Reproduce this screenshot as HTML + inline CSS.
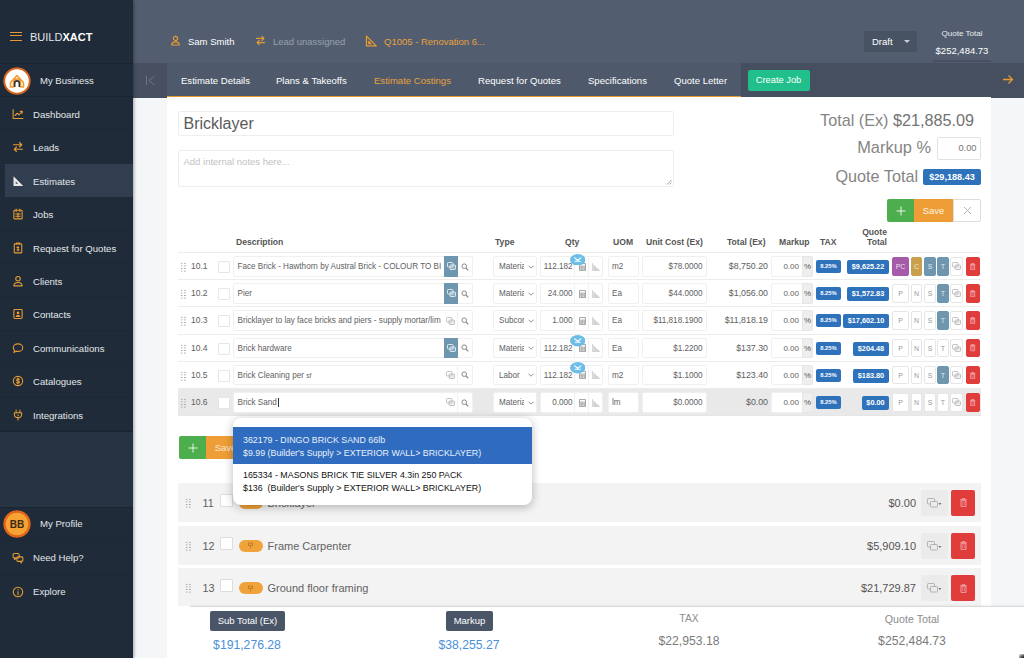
<!DOCTYPE html>
<html lang="en">
<head>
<meta charset="utf-8">
<title>Buildxact - Estimate Costings</title>
<style>
*{box-sizing:border-box;margin:0;padding:0}
html,body{width:1024px;height:658px;overflow:hidden}
body{font-family:"Liberation Sans",Arial,sans-serif;font-size:9px;color:#555;background:#f5f6f8;position:relative}
svg{display:block}
/* sidebar */
#side{position:absolute;left:0;top:0;width:133px;height:658px;background:#1f2b38;color:#e6e9ed;box-shadow:1px 0 3px rgba(0,0,0,.35);z-index:5}
#side .logo{position:absolute;left:30px;top:29.600px;font-size:11px;letter-spacing:0;color:#e4e6e8;line-height:14px}
#side .logo b{color:#fff;font-weight:700}
#side .burger{position:absolute;left:9.500px;top:32px;width:12px;height:9px;border-top:1.500px solid #e39a35;border-bottom:1.500px solid #e39a35}
#side .burger:after{content:"";position:absolute;left:0;right:0;top:2.300px;border-top:1.500px solid #e39a35}
#side .biz{position:absolute;left:0;top:63px;width:133px;height:34px;border-top:1px solid #19242f;border-bottom:1px solid #19242f;font-size:9.500px;line-height:33px;padding-left:40px;color:#e3e7eb}
#side .item{position:absolute;left:0;width:133px;height:33.400px;border-bottom:1px solid #1c2835;font-size:9.600px;line-height:35px;padding-left:33px;color:#e3e7eb;white-space:nowrap}
#side .item.on{background:#313e4f;left:5px;width:128px;padding-left:28px;border-bottom:0}
#side .item svg{position:absolute;left:11.500px;top:11px}
#side .item.on svg{left:6.500px}
.av{position:absolute;left:3px;width:28px;height:28px;border-radius:50%}
/* top */
#top{position:absolute;left:133px;top:0;width:891px;height:63px;background:#525e6f;color:#fff}
#tabs{position:absolute;left:133px;top:63px;width:891px;height:34.500px;background:#454f5f}
#tabs .tg{position:absolute;left:0;top:0;width:33.500px;height:34.500px;background:#474f61}
#tabs .strip{position:absolute;left:34px;top:0;width:574px;height:35px;background:#4e5a6b;border-bottom:2px solid #e8992f}
#tabs .t{position:absolute;top:0;line-height:35px;font-size:9.550px;color:#fff;white-space:nowrap}
#tabs .t.on{color:#e8a03c}
.tl{position:absolute;white-space:nowrap}
/* content */
#card{position:absolute;left:167px;top:97px;width:824px;height:509px;background:#fff}
.box{position:absolute;border:1px solid #eeeeee;background:#fff;border-radius:2px}
.badge{position:absolute;background:#2e72bb;color:#fff;font-weight:700;border-radius:2px;text-align:center;white-space:nowrap}
.btn{position:absolute;text-align:center;color:#fff}
.th{position:absolute;font-weight:700;font-size:8.600px;color:#555;white-space:nowrap;line-height:11px}
.row{position:absolute;left:178px;width:803px;height:27.200px;border-top:1px solid #ececec}
.row.hl{background:#e9e9e9}
.row .c{position:absolute;top:0;white-space:nowrap;line-height:27px;font-size:8.500px;color:#606060}
.row .in{position:absolute;top:3px;height:20.500px;border:1px solid #f0f0f0;background:#fff;border-radius:2px;line-height:19.500px;font-size:8.150px;color:#616161;white-space:nowrap;overflow:hidden}
.row .sq{position:absolute;top:4px;height:18.500px;border:1px solid #e6e6e6;background:#fff;border-radius:2px;line-height:17px;font-size:7px;color:#999;text-align:center}
.sec{position:absolute;left:178px;width:803px;height:39.500px;background:#f3f3f3}
.sec .n{position:absolute;left:24.500px;top:0;line-height:40px;font-size:10.800px;color:#606060}
.sec .cb{position:absolute;left:42px;top:11px;width:13px;height:13px;background:#fff;border:1px solid #ddd;border-radius:1px}
.sec .pill{position:absolute;left:60.500px;top:14px;width:24px;height:12px;border-radius:6px;background:#f0a23b}
.sec .nm{position:absolute;left:89.500px;top:0;line-height:40px;font-size:11px;color:#626262;white-space:nowrap}
.sec .pr{position:absolute;right:65px;top:0;line-height:40px;font-size:11px;color:#555;white-space:nowrap}
.sec .cp{position:absolute;left:743px;top:7px;width:27px;height:26px;background:#ebebeb;border-radius:2px}
.sec .del{position:absolute;left:773px;top:7px;width:23.500px;height:26px;background:#e03c3c;border-radius:2px}
.grip{position:absolute;width:6.600px;height:10.400px;background-image:radial-gradient(circle,#a4a4a4 0.600px,transparent 0.950px);background-size:3.300px 2.600px}
#foot{position:absolute;left:133px;top:606px;width:891px;height:52px;background:linear-gradient(90deg,#f5f6f8 0,#f5f6f8 34.500px,#fff 34.500px);border-top:1px solid transparent}
#foot:before{content:"";position:absolute;left:57px;right:0;top:-1px;height:1px;background:#d9d9d9;box-shadow:0 -1px 2px rgba(0,0,0,.07)}
#foot .fb{position:absolute;top:3.600px;height:20px;line-height:19.500px;background:#4a5568;color:#fff;border-radius:2px;text-align:center;font-size:9.500px}
#foot .v{position:absolute;font-size:12.200px;white-space:nowrap;transform:translateX(-50%)}
#dd{position:absolute;left:233px;top:418px;width:299px;height:87px;background:#fff;border-radius:8px;box-shadow:0 2px 10px rgba(0,0,0,.28);padding:9.300px 0;z-index:4;font-size:8.850px;color:#111;line-height:13px}
#dd div{height:36.300px;padding:6.500px 10px 0 10px;white-space:nowrap}
#dd div+div{padding-top:5.200px;line-height:13.400px}
#dd .sel{background:#2f6cbf;color:#e8f0fb}
</style>
</head>
<body>
<div id="side">
<div class="burger"></div>
<div class="logo">BUILD<b>XACT</b></div>
<div class="biz">My Business</div>
<svg class="av" style="top:67px" viewBox="0 0 28 28"><circle cx="14" cy="14" r="12.800" fill="#fff" stroke="#d9651e" stroke-width="2"/><path d="M7.500 15.500L14 8.500l6.500 7V20h-3v-4.500a3.500 3.500 0 0 0-7 0V20h-3z" fill="none" stroke="#f39a2e" stroke-width="1.600" stroke-linejoin="round"/><path d="M11.700 20v-3.800a2.300 2.300 0 0 1 4.600 0V20" fill="none" stroke="#333" stroke-width="1.600"/></svg>
<div class="item" style="top:97.0px"><svg width="12" height="12" viewBox="0 0 16 16" ><path fill="none" stroke="#e59a34" stroke-width="1.45" stroke-linecap="round" stroke-linejoin="round" d="M1.5 2v12h13"/><path fill="none" stroke="#e59a34" stroke-width="1.45" stroke-linecap="round" stroke-linejoin="round" d="M4 10l3-3 2.5 2 4-4.5"/><path fill="none" stroke="#e59a34" stroke-width="1.45" stroke-linecap="round" stroke-linejoin="round" d="M11 4.5h2.5V7"/></svg>Dashboard</div>
<div class="item" style="top:130.4px"><svg width="12" height="12" viewBox="0 0 16 16" ><path fill="none" stroke="#e59a34" stroke-width="1.45" stroke-linecap="round" stroke-linejoin="round" d="M2 5h11M10 2l3 3-3 3"/><path fill="none" stroke="#e59a34" stroke-width="1.45" stroke-linecap="round" stroke-linejoin="round" d="M14 11H3M6 8l-3 3 3 3"/></svg>Leads</div>
<div class="item on" style="top:163.8px"><svg width="12" height="12" viewBox="0 0 16 16" ><path fill="#e8e8e8" d="M2 1.5v13h13zM5 8.5l3 3H5z" fill-rule="evenodd"/></svg>Estimates</div>
<div class="item" style="top:197.2px"><svg width="12" height="12" viewBox="0 0 16 16" ><rect fill="none" stroke="#e59a34" stroke-width="1.45" stroke-linecap="round" stroke-linejoin="round" x="2.5" y="3" width="11" height="11.5" rx="1"/><path fill="none" stroke="#e59a34" stroke-width="1.45" stroke-linecap="round" stroke-linejoin="round" d="M5.5 1.5v3M10.5 1.5v3M5 8h6M5 11h6M8 6.5v6"/></svg>Jobs</div>
<div class="item" style="top:230.6px"><svg width="12" height="12" viewBox="0 0 16 16" ><rect fill="none" stroke="#e59a34" stroke-width="1.45" stroke-linecap="round" stroke-linejoin="round" x="3" y="2.5" width="10" height="12" rx="1"/><path fill="none" stroke="#e59a34" stroke-width="1.45" stroke-linecap="round" stroke-linejoin="round" d="M6 2.5v-1h4v1"/><path fill="none" stroke="#e59a34" stroke-width="1.45" stroke-linecap="round" stroke-linejoin="round" d="M8 6v5.5M6.7 7.2h2.2M6.7 10.5h2.6"/></svg>Request for Quotes</div>
<div class="item" style="top:264.0px"><svg width="12" height="12" viewBox="0 0 16 16" ><circle fill="none" stroke="#e59a34" stroke-width="1.45" stroke-linecap="round" stroke-linejoin="round" cx="8" cy="5" r="3"/><path fill="none" stroke="#e59a34" stroke-width="1.45" stroke-linecap="round" stroke-linejoin="round" d="M2.5 14.5c0-3.5 2.5-4.5 5.5-4.5s5.5 1 5.5 4.5z"/></svg>Clients</div>
<div class="item" style="top:297.4px"><svg width="12" height="12" viewBox="0 0 16 16" ><rect fill="none" stroke="#e59a34" stroke-width="1.45" stroke-linecap="round" stroke-linejoin="round" x="2.5" y="2" width="11" height="12" rx="1.2"/><circle cx="8" cy="6.5" r="1.8" fill="#e59a34"/><path fill="#e59a34" d="M4.8 12c0-2 1.4-2.7 3.2-2.7s3.2.7 3.2 2.7z"/></svg>Contacts</div>
<div class="item" style="top:330.8px"><svg width="12" height="12" viewBox="0 0 16 16" ><path fill="none" stroke="#e59a34" stroke-width="1.45" stroke-linecap="round" stroke-linejoin="round" d="M8 2.5c3.6 0 6.3 2.2 6.3 5s-2.7 5-6.3 5c-.8 0-1.6-.1-2.3-.3L2.5 14l1-2.7C2.400 10.400 1.700 9 1.700 7.500c0-2.800 2.700-5 6.300-5z"/></svg>Communications</div>
<div class="item" style="top:364.2px"><svg width="12" height="12" viewBox="0 0 16 16" ><circle fill="none" stroke="#e59a34" stroke-width="1.45" stroke-linecap="round" stroke-linejoin="round" cx="8" cy="8" r="6.2"/><path fill="none" stroke="#e59a34" stroke-width="1.45" stroke-linecap="round" stroke-linejoin="round" stroke-width="1.200" d="M9.800 6c-.3-.6-1-.9-1.800-.9-1 0-1.800.5-1.800 1.400 0 2 3.700.9 3.700 2.900 0 .9-.8 1.500-1.900 1.500-.9 0-1.600-.4-1.900-1M8 4v8"/></svg>Catalogues</div>
<div class="item" style="top:397.6px"><svg width="12" height="12" viewBox="0 0 16 16" ><path fill="none" stroke="#e59a34" stroke-width="1.45" stroke-linecap="round" stroke-linejoin="round" d="M5.500 1.500v3.500M10.500 1.500v3.500"/><path fill="none" stroke="#e59a34" stroke-width="1.45" stroke-linecap="round" stroke-linejoin="round" d="M3.200 5h9.600v2.300c0 2.600-2 4.200-4.800 4.200s-4.800-1.600-4.800-4.200z"/><path fill="none" stroke="#e59a34" stroke-width="1.45" stroke-linecap="round" stroke-linejoin="round" d="M8 11.500v3"/><path fill="#e59a34" d="M8.600 6.300L6.600 8.800h1.300l-.5 1.700 2-2.500H8.100z"/></svg>Integrations</div>
<div style="position:absolute;left:0;top:431px;width:133px;height:77px;border-top:1px solid #19242f;border-bottom:1px solid #19242f;background:#253342"></div>
<div class="item" style="top:508px;padding-left:40px;line-height:32.500px">My Profile</div>
<svg class="av" style="top:510px" viewBox="0 0 28 28"><circle cx="14" cy="14" r="12.500" fill="#f7a233" stroke="#e0661c" stroke-width="2.500"/><text x="14" y="17.800" text-anchor="middle" font-family="Liberation Sans, Arial, sans-serif" font-weight="700" font-size="10" fill="#3a2a18">BB</text></svg>
<div class="item" style="top:541.400px;line-height:34.500px"><svg width="12" height="12" viewBox="0 0 16 16" ><rect fill="none" stroke="#e59a34" stroke-width="1.45" stroke-linecap="round" stroke-linejoin="round" x="1.500" y="2" width="8" height="6" rx="1.500"/><path fill="none" stroke="#e59a34" stroke-width="1.45" stroke-linecap="round" stroke-linejoin="round" d="M3.500 8v2l2-2"/><rect fill="none" stroke="#e59a34" stroke-width="1.45" stroke-linecap="round" stroke-linejoin="round" x="6.500" y="6.500" width="8" height="6" rx="1.500" fill="#1f2b38"/><path fill="none" stroke="#e59a34" stroke-width="1.45" stroke-linecap="round" stroke-linejoin="round" d="M12.500 12.500v2l-2-2"/></svg>Need Help?</div>
<div class="item" style="top:574.800px;border-bottom:0;line-height:33.500px"><svg width="12" height="12" viewBox="0 0 16 16" ><circle fill="none" stroke="#e59a34" stroke-width="1.45" stroke-linecap="round" stroke-linejoin="round" cx="8" cy="8" r="6.300"/><path fill="none" stroke="#e59a34" stroke-width="1.45" stroke-linecap="round" stroke-linejoin="round" d="M8 7.500v4M8 4.800v.2"/></svg>Explore</div>
</div>
<div id="top">
<svg class="tl" style="left:37px;top:35px" width="11" height="11" viewBox="0 0 16 16"><circle fill="none" stroke="#e59a34" stroke-width="1.700" stroke-linecap="round" stroke-linejoin="round" cx="8" cy="5" r="3"/><path fill="none" stroke="#e59a34" stroke-width="1.700" stroke-linecap="round" stroke-linejoin="round" d="M2.500 14.500c0-3.500 2.500-4.500 5.500-4.500s5.500 1 5.500 4.500z"/></svg><div class="tl" style="left:55px;top:34.600px;font-size:9.500px;line-height:14px;color:#fff">Sam Smith</div>
<svg class="tl" style="left:122px;top:35px" width="11" height="11" viewBox="0 0 16 16"><path fill="none" stroke="#e59a34" stroke-width="1.700" stroke-linecap="round" stroke-linejoin="round" d="M2 5h11M10 2l3 3-3 3"/><path fill="none" stroke="#e59a34" stroke-width="1.700" stroke-linecap="round" stroke-linejoin="round" d="M14 11H3M6 8l-3 3 3 3"/></svg><div class="tl" style="left:140px;top:34.600px;font-size:9.500px;line-height:14px;color:#96a0ad">Lead unassigned</div>
<svg class="tl" style="left:232px;top:35px" width="12" height="12" viewBox="0 0 16 16"><path fill="none" stroke="#e59a34" stroke-width="1.700" stroke-linecap="round" stroke-linejoin="round" d="M2 1.500v13h13zM5 8.500l3 3H5z"/></svg><div class="tl" style="left:251px;top:34.600px;font-size:9.500px;line-height:14px;color:#e8a03c">Q1005 - Renovation 6...</div>
<div class="tl" style="left:731px;top:31px;width:53px;height:21px;background:#475263;border-radius:1px;color:#fff;font-size:9.500px;line-height:21px;padding-left:8px">Draft<span style="position:absolute;left:40px;top:9px;border:3px solid transparent;border-top:3.500px solid #c9ced6;border-bottom:0"></span></div>
<div class="tl" style="left:800px;top:42px;width:58px;height:20px;border-bottom:2px solid #465061"></div><div class="tl" style="left:800px;top:28.400px;width:58px;text-align:center;font-size:8.100px;line-height:12px;color:#e8ebee">Quote Total</div>
<div class="tl" style="left:795px;top:43.800px;width:68px;text-align:center;font-size:9.500px;line-height:14px;color:#fff">$252,484.73</div>
</div>
<div id="tabs"><div class="tg"></div><div class="strip"></div>
<svg class="tl" style="left:11.500px;top:11.500px" width="11" height="11" viewBox="0 0 10 10"><path d="M1.300 1v8M8.600 1L3.600 5l5 4" fill="none" stroke="#6f7989" stroke-width=".9"/></svg><div class="t" style="left:48px">Estimate Details</div><div class="t" style="left:143px">Plans &amp; Takeoffs</div><div class="t on" style="left:241px">Estimate Costings</div><div class="t" style="left:345px">Request for Quotes</div><div class="t" style="left:455px">Specifications</div><div class="t" style="left:541px">Quote Letter</div>
<div class="tl" style="left:614.500px;top:6.500px;width:62px;height:21px;background:#21bf8b;border-radius:2px;color:#fff;font-size:9.300px;line-height:21px;text-align:center">Create Job</div>
<svg class="tl" style="left:869px;top:11px" width="12" height="11" viewBox="0 0 12 11"><path d="M1 5.500h9.500M6.500 1.500l4 4-4 4" fill="none" stroke="#e59a34" stroke-width="1.300"/></svg></div>
<div id="card"></div>
<div class="box" style="left:178px;top:111px;width:496px;height:25px;font-size:16px;line-height:24px;padding-left:4.500px;color:#5a5a5a">Bricklayer</div>
<div class="box" style="left:178px;top:150px;width:496px;height:37px;font-size:9.500px;line-height:12px;padding:4.500px 4.500px;color:#c2c2c2">Add internal notes here...<svg style="position:absolute;right:1px;bottom:1px" width="6" height="6" viewBox="0 0 6 6"><path d="M5.500 1L1 5.500M5.500 3.500l-2 2" stroke="#888" stroke-width=".8" fill="none"/></svg></div>
<div class="tl" style="right:50px;top:110px;font-size:16.200px;line-height:20px;color:#858585">Total (Ex) <span style="color:#737373">$21,885.09</span></div>
<div class="tl" style="right:93px;top:137px;font-size:16.400px;line-height:20px;color:#858585">Markup %</div>
<div class="box" style="left:936.500px;top:136.500px;width:44.500px;height:23px;font-size:9.300px;line-height:21px;text-align:right;padding-right:3.500px;color:#777;border-color:#e2e2e2">0.00</div>
<div class="tl" style="right:106px;top:166px;font-size:16.200px;line-height:20px;color:#858585">Quote Total</div>
<div class="badge" style="left:923px;top:169px;width:58px;height:16px;font-size:9.100px;line-height:16px">$29,188.43</div>
<div class="btn" style="left:887px;top:199px;width:27px;height:23px;background:#4cae4c;border-radius:2px 0 0 2px"><svg style="position:absolute;left:8.5px;top:6.5px" width="10" height="10" viewBox="0 0 10 10"><path d="M5 .5v9M.5 5h9" stroke="#e8f5e8" stroke-width="1"/></svg></div>
<div class="btn" style="left:914px;top:199px;width:39px;height:23px;background:#ef9d36;font-size:9.400px;line-height:23px;color:#fff4e2">Save</div>
<div class="btn" style="left:953px;top:199px;width:28px;height:23px;background:#fff;border:1px solid #ddd;border-radius:0 2px 2px 0"><svg style="position:absolute;left:8.500px;top:6px" width="9" height="9" viewBox="0 0 9 9"><path d="M1 1l7 7M8 1L1 8" stroke="#b5b5b5" stroke-width="1"/></svg></div>
<div class="th" style="left:236px;top:236.500px">Description</div><div class="th" style="left:495px;top:236.500px">Type</div><div class="th" style="left:565px;top:236.500px">Qty</div><div class="th" style="left:613px;top:236.500px">UOM</div><div class="th" style="left:646px;top:236.500px">Unit Cost (Ex)</div><div class="th" style="left:727px;top:236.500px">Total (Ex)</div><div class="th" style="left:779px;top:236.500px">Markup</div><div class="th" style="left:820px;top:236.500px">TAX</div><div class="th" style="left:850px;width:37px;top:226.500px;text-align:right;line-height:10.800px">Quote<br>Total</div>
<div class="row" style="top:252.0px"><div class="grip" style="left:1.500px;top:9px"></div><div class="c" style="left:13px">10.1</div><div style="position:absolute;left:40px;top:8px;width:12px;height:12px;border:1px solid #e6e6e6;background:#fff;border-radius:1px"></div><div class="in" style="left:55px;width:212px;padding-left:3.500px;border-radius:2px 0 0 2px">Face Brick - Hawthorn by Austral Brick - COLOUR TO BI</div><div class="in" style="left:266px;width:14px;background:#6e97af;border-color:#6e97af;border-radius:0"><svg style="position:absolute;left:50%;top:50%;margin:-4px 0 0 -4.500px" width="9" height="8" viewBox="0 0 9 8"><rect x=".5" y=".5" width="5.500" height="4.500" rx=".8" fill="none" stroke="#e6eef3" stroke-width=".9"/><rect x="3" y="3" width="5.500" height="4.500" rx=".8" fill="#e6eef3" stroke="#e6eef3" stroke-width=".9" fill-opacity=".25"/></svg></div><div class="in" style="left:280px;width:15px;border-left:0;border-radius:0 2px 2px 0"><svg style="position:absolute;left:3px;top:5.500px" width="8" height="8" viewBox="0 0 8 8"><circle cx="3.200" cy="3.200" r="2.300" fill="none" stroke="#888" stroke-width="1"/><path d="M5 5l2.300 2.300" stroke="#888" stroke-width="1.200"/></svg></div><div class="in" style="left:315px;width:44px;padding-left:5px">Materia<span style="position:absolute;right:0;top:0;width:12px;height:19px;background:#fff"></span><svg style="position:absolute;right:2.500px;top:7.500px" width="6" height="4" viewBox="0 0 6 4"><path d="M.5.700l2.500 2.500 2.500-2.500" fill="none" stroke="#888" stroke-width=".9"/></svg></div><div class="in" style="left:362px;width:35px;text-align:right;padding-right:1.500px;border-radius:2px 0 0 2px">112.182</div><div class="in" style="left:396px;width:15px;border-radius:0"><svg style="position:absolute;left:4px;top:5.500px" width="7" height="8" viewBox="0 0 7 8"><rect x="0" y="0" width="7" height="8" rx=".7" fill="#a8a8a8"/><rect x="1" y="1" width="5" height="1.600" fill="#fff"/><path d="M1 3.800h5M1 5.200h5M1 6.600h5" stroke="#fff" stroke-width=".6" stroke-dasharray="1 .5"/></svg></div><div class="in" style="left:410px;width:15px;border-radius:0 2px 2px 0"><svg style="position:absolute;left:3px;top:5.500px" width="8" height="8" viewBox="0 0 8 8"><path d="M.4 0v7.600H8" fill="none" stroke="#c4c4c4" stroke-width=".8"/><path d="M1.300 1l1.700 1.700 1.500 1.800 1.500 1 1.500 1.700H1.300z" fill="#d2d2d2"/></svg></div><svg style="position:absolute;left:391.500px;top:.5px;z-index:2" width="15.500" height="11.500" viewBox="0 0 15 12" preserveAspectRatio="none"><ellipse cx="7.500" cy="6" rx="7.500" ry="6" fill="#6cbde8"/><path d="M4.500 4l3 2.500 3-2.500M5 7.500h5" stroke="#fff" stroke-width="1.100" fill="none" stroke-linecap="round"/></svg><div class="in" style="left:430px;width:31px;padding-left:3px">m2</div><div class="in" style="left:464px;width:65px;text-align:right;padding-right:3.500px">$78.0000</div><div class="c" style="right:213px;font-size:8.800px">$8,750.20</div><div class="in" style="left:593px;width:32px;text-align:right;padding-right:3px;border-radius:2px 0 0 2px;font-size:8px">0.00</div><div class="in" style="left:624px;width:11px;background:#eee;border-color:#e6e6e6;border-radius:0 2px 2px 0;text-align:center;font-size:8px;color:#555">%</div><div class="badge" style="left:638px;top:7px;width:25px;height:13px;font-size:5.800px;line-height:13px">8.25%</div><div class="badge" style="right:92px;top:7px;width:42px;height:14px;font-size:7.300px;line-height:14px">$9,625.22</div><div class="sq" style="left:714px;width:17px;background:#a55ba9;border-color:#a55ba9;color:#f0dff1">PC</div><div class="sq" style="left:733px;width:11px;background:#c9a14d;border-color:#c9a14d;color:#f3e7cb">C</div><div class="sq" style="left:746px;width:12px;background:#6e97af;border-color:#6e97af;color:#dfe9ef">S</div><div class="sq" style="left:759px;width:12px;background:#6e97af;border-color:#6e97af;color:#dfe9ef">T</div><div class="sq" style="left:772px;width:13px"><svg style="position:absolute;left:50%;top:50%;margin:-4px 0 0 -4.500px" width="9" height="8" viewBox="0 0 9 8"><rect x=".5" y=".5" width="5.500" height="4.500" rx=".8" fill="none" stroke="#bbb" stroke-width=".9"/><rect x="3" y="3" width="5.500" height="4.500" rx=".8" fill="#bbb" stroke="#bbb" stroke-width=".9" fill-opacity=".25"/></svg></div><div class="sq" style="left:788px;width:14px;background:#e03c3c;border-color:#e03c3c"><svg style="position:absolute;left:50%;top:50%;margin:-3.500px 0 0 -2.700px" width="5.400" height="7.200" viewBox="0 0 6 8"><path d="M0 1.500h6M2 1.500V.5h2v1M.8 2.500h4.400V7.500H.8z" fill="none" stroke="#f6bcbc" stroke-width=".8"/><path d="M2.300 3.500v3M3.700 3.500v3" stroke="#f6bcbc" stroke-width=".5"/></svg></div></div>
<div class="row" style="top:279.2px"><div class="grip" style="left:1.500px;top:9px"></div><div class="c" style="left:13px">10.2</div><div style="position:absolute;left:40px;top:8px;width:12px;height:12px;border:1px solid #e6e6e6;background:#fff;border-radius:1px"></div><div class="in" style="left:55px;width:212px;padding-left:3.500px;border-radius:2px 0 0 2px">Pier</div><div class="in" style="left:266px;width:14px;background:#6e97af;border-color:#6e97af;border-radius:0"><svg style="position:absolute;left:50%;top:50%;margin:-4px 0 0 -4.500px" width="9" height="8" viewBox="0 0 9 8"><rect x=".5" y=".5" width="5.500" height="4.500" rx=".8" fill="none" stroke="#e6eef3" stroke-width=".9"/><rect x="3" y="3" width="5.500" height="4.500" rx=".8" fill="#e6eef3" stroke="#e6eef3" stroke-width=".9" fill-opacity=".25"/></svg></div><div class="in" style="left:280px;width:15px;border-left:0;border-radius:0 2px 2px 0"><svg style="position:absolute;left:3px;top:5.500px" width="8" height="8" viewBox="0 0 8 8"><circle cx="3.200" cy="3.200" r="2.300" fill="none" stroke="#888" stroke-width="1"/><path d="M5 5l2.300 2.300" stroke="#888" stroke-width="1.200"/></svg></div><div class="in" style="left:315px;width:44px;padding-left:5px">Materia<span style="position:absolute;right:0;top:0;width:12px;height:19px;background:#fff"></span><svg style="position:absolute;right:2.500px;top:7.500px" width="6" height="4" viewBox="0 0 6 4"><path d="M.5.700l2.500 2.500 2.500-2.500" fill="none" stroke="#888" stroke-width=".9"/></svg></div><div class="in" style="left:362px;width:35px;text-align:right;padding-right:1.500px;border-radius:2px 0 0 2px">24.000</div><div class="in" style="left:396px;width:15px;border-radius:0"><svg style="position:absolute;left:4px;top:5.500px" width="7" height="8" viewBox="0 0 7 8"><rect x="0" y="0" width="7" height="8" rx=".7" fill="#a8a8a8"/><rect x="1" y="1" width="5" height="1.600" fill="#fff"/><path d="M1 3.800h5M1 5.200h5M1 6.600h5" stroke="#fff" stroke-width=".6" stroke-dasharray="1 .5"/></svg></div><div class="in" style="left:410px;width:15px;border-radius:0 2px 2px 0"><svg style="position:absolute;left:3px;top:5.500px" width="8" height="8" viewBox="0 0 8 8"><path d="M.4 0v7.600H8" fill="none" stroke="#c4c4c4" stroke-width=".8"/><path d="M1.300 1l1.700 1.700 1.500 1.800 1.500 1 1.500 1.700H1.300z" fill="#d2d2d2"/></svg></div><div class="in" style="left:430px;width:31px;padding-left:3px">Ea</div><div class="in" style="left:464px;width:65px;text-align:right;padding-right:3.500px">$44.0000</div><div class="c" style="right:213px;font-size:8.800px">$1,056.00</div><div class="in" style="left:593px;width:32px;text-align:right;padding-right:3px;border-radius:2px 0 0 2px;font-size:8px">0.00</div><div class="in" style="left:624px;width:11px;background:#eee;border-color:#e6e6e6;border-radius:0 2px 2px 0;text-align:center;font-size:8px;color:#555">%</div><div class="badge" style="left:638px;top:7px;width:25px;height:13px;font-size:5.800px;line-height:13px">8.25%</div><div class="badge" style="right:92px;top:7px;width:42px;height:14px;font-size:7.300px;line-height:14px">$1,572.83</div><div class="sq" style="left:714px;width:17px">P</div><div class="sq" style="left:733px;width:11px">N</div><div class="sq" style="left:746px;width:12px">S</div><div class="sq" style="left:759px;width:12px;background:#6e97af;border-color:#6e97af;color:#dfe9ef">T</div><div class="sq" style="left:772px;width:13px"><svg style="position:absolute;left:50%;top:50%;margin:-4px 0 0 -4.500px" width="9" height="8" viewBox="0 0 9 8"><rect x=".5" y=".5" width="5.500" height="4.500" rx=".8" fill="none" stroke="#bbb" stroke-width=".9"/><rect x="3" y="3" width="5.500" height="4.500" rx=".8" fill="#bbb" stroke="#bbb" stroke-width=".9" fill-opacity=".25"/></svg></div><div class="sq" style="left:788px;width:14px;background:#e03c3c;border-color:#e03c3c"><svg style="position:absolute;left:50%;top:50%;margin:-3.500px 0 0 -2.700px" width="5.400" height="7.200" viewBox="0 0 6 8"><path d="M0 1.500h6M2 1.500V.5h2v1M.8 2.500h4.400V7.500H.8z" fill="none" stroke="#f6bcbc" stroke-width=".8"/><path d="M2.300 3.500v3M3.700 3.500v3" stroke="#f6bcbc" stroke-width=".5"/></svg></div></div>
<div class="row" style="top:306.4px"><div class="grip" style="left:1.500px;top:9px"></div><div class="c" style="left:13px">10.3</div><div style="position:absolute;left:40px;top:8px;width:12px;height:12px;border:1px solid #e6e6e6;background:#fff;border-radius:1px"></div><div class="in" style="left:55px;width:212px;padding-left:3.500px;border-radius:2px 0 0 2px">Bricklayer to lay face bricks and piers - supply mortar/lim</div><div class="in" style="left:266px;width:14px;border-radius:0;border-left:0"><svg style="position:absolute;left:50%;top:50%;margin:-4px 0 0 -4.500px" width="9" height="8" viewBox="0 0 9 8"><rect x=".5" y=".5" width="5.500" height="4.500" rx=".8" fill="none" stroke="#bbb" stroke-width=".9"/><rect x="3" y="3" width="5.500" height="4.500" rx=".8" fill="#bbb" stroke="#bbb" stroke-width=".9" fill-opacity=".25"/></svg></div><div class="in" style="left:280px;width:15px;border-left:0;border-radius:0 2px 2px 0"><svg style="position:absolute;left:3px;top:5.500px" width="8" height="8" viewBox="0 0 8 8"><circle cx="3.200" cy="3.200" r="2.300" fill="none" stroke="#888" stroke-width="1"/><path d="M5 5l2.300 2.300" stroke="#888" stroke-width="1.200"/></svg></div><div class="in" style="left:315px;width:44px;padding-left:5px">Subcon<span style="position:absolute;right:0;top:0;width:12px;height:19px;background:#fff"></span><svg style="position:absolute;right:2.500px;top:7.500px" width="6" height="4" viewBox="0 0 6 4"><path d="M.5.700l2.500 2.500 2.500-2.500" fill="none" stroke="#888" stroke-width=".9"/></svg></div><div class="in" style="left:362px;width:35px;text-align:right;padding-right:1.500px;border-radius:2px 0 0 2px">1.000</div><div class="in" style="left:396px;width:15px;border-radius:0"><svg style="position:absolute;left:4px;top:5.500px" width="7" height="8" viewBox="0 0 7 8"><rect x="0" y="0" width="7" height="8" rx=".7" fill="#a8a8a8"/><rect x="1" y="1" width="5" height="1.600" fill="#fff"/><path d="M1 3.800h5M1 5.200h5M1 6.600h5" stroke="#fff" stroke-width=".6" stroke-dasharray="1 .5"/></svg></div><div class="in" style="left:410px;width:15px;border-radius:0 2px 2px 0"><svg style="position:absolute;left:3px;top:5.500px" width="8" height="8" viewBox="0 0 8 8"><path d="M.4 0v7.600H8" fill="none" stroke="#c4c4c4" stroke-width=".8"/><path d="M1.300 1l1.700 1.700 1.500 1.800 1.500 1 1.500 1.700H1.300z" fill="#d2d2d2"/></svg></div><div class="in" style="left:430px;width:31px;padding-left:3px">Ea</div><div class="in" style="left:464px;width:65px;text-align:right;padding-right:3.500px">$11,818.1900</div><div class="c" style="right:213px;font-size:8.800px">$11,818.19</div><div class="in" style="left:593px;width:32px;text-align:right;padding-right:3px;border-radius:2px 0 0 2px;font-size:8px">0.00</div><div class="in" style="left:624px;width:11px;background:#eee;border-color:#e6e6e6;border-radius:0 2px 2px 0;text-align:center;font-size:8px;color:#555">%</div><div class="badge" style="left:638px;top:7px;width:25px;height:13px;font-size:5.800px;line-height:13px">8.25%</div><div class="badge" style="right:92px;top:7px;width:46px;height:14px;font-size:7.300px;line-height:14px">$17,602.10</div><div class="sq" style="left:714px;width:17px">P</div><div class="sq" style="left:733px;width:11px">N</div><div class="sq" style="left:746px;width:12px">S</div><div class="sq" style="left:759px;width:12px;background:#6e97af;border-color:#6e97af;color:#dfe9ef">T</div><div class="sq" style="left:772px;width:13px"><svg style="position:absolute;left:50%;top:50%;margin:-4px 0 0 -4.500px" width="9" height="8" viewBox="0 0 9 8"><rect x=".5" y=".5" width="5.500" height="4.500" rx=".8" fill="none" stroke="#bbb" stroke-width=".9"/><rect x="3" y="3" width="5.500" height="4.500" rx=".8" fill="#bbb" stroke="#bbb" stroke-width=".9" fill-opacity=".25"/></svg></div><div class="sq" style="left:788px;width:14px;background:#e03c3c;border-color:#e03c3c"><svg style="position:absolute;left:50%;top:50%;margin:-3.500px 0 0 -2.700px" width="5.400" height="7.200" viewBox="0 0 6 8"><path d="M0 1.500h6M2 1.500V.5h2v1M.8 2.500h4.400V7.500H.8z" fill="none" stroke="#f6bcbc" stroke-width=".8"/><path d="M2.300 3.500v3M3.700 3.500v3" stroke="#f6bcbc" stroke-width=".5"/></svg></div></div>
<div class="row" style="top:333.6px"><div class="grip" style="left:1.500px;top:9px"></div><div class="c" style="left:13px">10.4</div><div style="position:absolute;left:40px;top:8px;width:12px;height:12px;border:1px solid #e6e6e6;background:#fff;border-radius:1px"></div><div class="in" style="left:55px;width:212px;padding-left:3.500px;border-radius:2px 0 0 2px">Brick hardware</div><div class="in" style="left:266px;width:14px;background:#6e97af;border-color:#6e97af;border-radius:0"><svg style="position:absolute;left:50%;top:50%;margin:-4px 0 0 -4.500px" width="9" height="8" viewBox="0 0 9 8"><rect x=".5" y=".5" width="5.500" height="4.500" rx=".8" fill="none" stroke="#e6eef3" stroke-width=".9"/><rect x="3" y="3" width="5.500" height="4.500" rx=".8" fill="#e6eef3" stroke="#e6eef3" stroke-width=".9" fill-opacity=".25"/></svg></div><div class="in" style="left:280px;width:15px;border-left:0;border-radius:0 2px 2px 0"><svg style="position:absolute;left:3px;top:5.500px" width="8" height="8" viewBox="0 0 8 8"><circle cx="3.200" cy="3.200" r="2.300" fill="none" stroke="#888" stroke-width="1"/><path d="M5 5l2.300 2.300" stroke="#888" stroke-width="1.200"/></svg></div><div class="in" style="left:315px;width:44px;padding-left:5px">Materia<span style="position:absolute;right:0;top:0;width:12px;height:19px;background:#fff"></span><svg style="position:absolute;right:2.500px;top:7.500px" width="6" height="4" viewBox="0 0 6 4"><path d="M.5.700l2.500 2.500 2.500-2.500" fill="none" stroke="#888" stroke-width=".9"/></svg></div><div class="in" style="left:362px;width:35px;text-align:right;padding-right:1.500px;border-radius:2px 0 0 2px">112.182</div><div class="in" style="left:396px;width:15px;border-radius:0"><svg style="position:absolute;left:4px;top:5.500px" width="7" height="8" viewBox="0 0 7 8"><rect x="0" y="0" width="7" height="8" rx=".7" fill="#a8a8a8"/><rect x="1" y="1" width="5" height="1.600" fill="#fff"/><path d="M1 3.800h5M1 5.200h5M1 6.600h5" stroke="#fff" stroke-width=".6" stroke-dasharray="1 .5"/></svg></div><div class="in" style="left:410px;width:15px;border-radius:0 2px 2px 0"><svg style="position:absolute;left:3px;top:5.500px" width="8" height="8" viewBox="0 0 8 8"><path d="M.4 0v7.600H8" fill="none" stroke="#c4c4c4" stroke-width=".8"/><path d="M1.300 1l1.700 1.700 1.500 1.800 1.500 1 1.500 1.700H1.300z" fill="#d2d2d2"/></svg></div><svg style="position:absolute;left:391.500px;top:.5px;z-index:2" width="15.500" height="11.500" viewBox="0 0 15 12" preserveAspectRatio="none"><ellipse cx="7.500" cy="6" rx="7.500" ry="6" fill="#6cbde8"/><path d="M4.500 4l3 2.500 3-2.500M5 7.500h5" stroke="#fff" stroke-width="1.100" fill="none" stroke-linecap="round"/></svg><div class="in" style="left:430px;width:31px;padding-left:3px">Ea</div><div class="in" style="left:464px;width:65px;text-align:right;padding-right:3.500px">$1.2200</div><div class="c" style="right:213px;font-size:8.800px">$137.30</div><div class="in" style="left:593px;width:32px;text-align:right;padding-right:3px;border-radius:2px 0 0 2px;font-size:8px">0.00</div><div class="in" style="left:624px;width:11px;background:#eee;border-color:#e6e6e6;border-radius:0 2px 2px 0;text-align:center;font-size:8px;color:#555">%</div><div class="badge" style="left:638px;top:7px;width:25px;height:13px;font-size:5.800px;line-height:13px">8.25%</div><div class="badge" style="right:92px;top:7px;width:36px;height:14px;font-size:7.300px;line-height:14px">$204.48</div><div class="sq" style="left:714px;width:17px">P</div><div class="sq" style="left:733px;width:11px">N</div><div class="sq" style="left:746px;width:12px">S</div><div class="sq" style="left:759px;width:12px">T</div><div class="sq" style="left:772px;width:13px"><svg style="position:absolute;left:50%;top:50%;margin:-4px 0 0 -4.500px" width="9" height="8" viewBox="0 0 9 8"><rect x=".5" y=".5" width="5.500" height="4.500" rx=".8" fill="none" stroke="#bbb" stroke-width=".9"/><rect x="3" y="3" width="5.500" height="4.500" rx=".8" fill="#bbb" stroke="#bbb" stroke-width=".9" fill-opacity=".25"/></svg></div><div class="sq" style="left:788px;width:14px;background:#e03c3c;border-color:#e03c3c"><svg style="position:absolute;left:50%;top:50%;margin:-3.500px 0 0 -2.700px" width="5.400" height="7.200" viewBox="0 0 6 8"><path d="M0 1.500h6M2 1.500V.5h2v1M.8 2.500h4.400V7.500H.8z" fill="none" stroke="#f6bcbc" stroke-width=".8"/><path d="M2.300 3.500v3M3.700 3.500v3" stroke="#f6bcbc" stroke-width=".5"/></svg></div></div>
<div class="row" style="top:360.8px"><div class="grip" style="left:1.500px;top:9px"></div><div class="c" style="left:13px">10.5</div><div style="position:absolute;left:40px;top:8px;width:12px;height:12px;border:1px solid #e6e6e6;background:#fff;border-radius:1px"></div><div class="in" style="left:55px;width:212px;padding-left:3.500px;border-radius:2px 0 0 2px">Brick Cleaning per <span style="font-size:6.500px">sf</span></div><div class="in" style="left:266px;width:14px;border-radius:0;border-left:0"><svg style="position:absolute;left:50%;top:50%;margin:-4px 0 0 -4.500px" width="9" height="8" viewBox="0 0 9 8"><rect x=".5" y=".5" width="5.500" height="4.500" rx=".8" fill="none" stroke="#bbb" stroke-width=".9"/><rect x="3" y="3" width="5.500" height="4.500" rx=".8" fill="#bbb" stroke="#bbb" stroke-width=".9" fill-opacity=".25"/></svg></div><div class="in" style="left:280px;width:15px;border-left:0;border-radius:0 2px 2px 0"><svg style="position:absolute;left:3px;top:5.500px" width="8" height="8" viewBox="0 0 8 8"><circle cx="3.200" cy="3.200" r="2.300" fill="none" stroke="#888" stroke-width="1"/><path d="M5 5l2.300 2.300" stroke="#888" stroke-width="1.200"/></svg></div><div class="in" style="left:315px;width:44px;padding-left:5px">Labor<span style="position:absolute;right:0;top:0;width:12px;height:19px;background:#fff"></span><svg style="position:absolute;right:2.500px;top:7.500px" width="6" height="4" viewBox="0 0 6 4"><path d="M.5.700l2.500 2.500 2.500-2.500" fill="none" stroke="#888" stroke-width=".9"/></svg></div><div class="in" style="left:362px;width:35px;text-align:right;padding-right:1.500px;border-radius:2px 0 0 2px">112.182</div><div class="in" style="left:396px;width:15px;border-radius:0"><svg style="position:absolute;left:4px;top:5.500px" width="7" height="8" viewBox="0 0 7 8"><rect x="0" y="0" width="7" height="8" rx=".7" fill="#a8a8a8"/><rect x="1" y="1" width="5" height="1.600" fill="#fff"/><path d="M1 3.800h5M1 5.200h5M1 6.600h5" stroke="#fff" stroke-width=".6" stroke-dasharray="1 .5"/></svg></div><div class="in" style="left:410px;width:15px;border-radius:0 2px 2px 0"><svg style="position:absolute;left:3px;top:5.500px" width="8" height="8" viewBox="0 0 8 8"><path d="M.4 0v7.600H8" fill="none" stroke="#c4c4c4" stroke-width=".8"/><path d="M1.300 1l1.700 1.700 1.500 1.800 1.500 1 1.500 1.700H1.300z" fill="#d2d2d2"/></svg></div><svg style="position:absolute;left:391.500px;top:.5px;z-index:2" width="15.500" height="11.500" viewBox="0 0 15 12" preserveAspectRatio="none"><ellipse cx="7.500" cy="6" rx="7.500" ry="6" fill="#6cbde8"/><path d="M4.500 4l3 2.500 3-2.500M5 7.500h5" stroke="#fff" stroke-width="1.100" fill="none" stroke-linecap="round"/></svg><div class="in" style="left:430px;width:31px;padding-left:3px">m2</div><div class="in" style="left:464px;width:65px;text-align:right;padding-right:3.500px">$1.1000</div><div class="c" style="right:213px;font-size:8.800px">$123.40</div><div class="in" style="left:593px;width:32px;text-align:right;padding-right:3px;border-radius:2px 0 0 2px;font-size:8px">0.00</div><div class="in" style="left:624px;width:11px;background:#eee;border-color:#e6e6e6;border-radius:0 2px 2px 0;text-align:center;font-size:8px;color:#555">%</div><div class="badge" style="left:638px;top:7px;width:25px;height:13px;font-size:5.800px;line-height:13px">8.25%</div><div class="badge" style="right:92px;top:7px;width:36px;height:14px;font-size:7.300px;line-height:14px">$183.80</div><div class="sq" style="left:714px;width:17px">P</div><div class="sq" style="left:733px;width:11px">N</div><div class="sq" style="left:746px;width:12px">S</div><div class="sq" style="left:759px;width:12px;background:#6e97af;border-color:#6e97af;color:#dfe9ef">T</div><div class="sq" style="left:772px;width:13px"><svg style="position:absolute;left:50%;top:50%;margin:-4px 0 0 -4.500px" width="9" height="8" viewBox="0 0 9 8"><rect x=".5" y=".5" width="5.500" height="4.500" rx=".8" fill="none" stroke="#bbb" stroke-width=".9"/><rect x="3" y="3" width="5.500" height="4.500" rx=".8" fill="#bbb" stroke="#bbb" stroke-width=".9" fill-opacity=".25"/></svg></div><div class="sq" style="left:788px;width:14px;background:#e03c3c;border-color:#e03c3c"><svg style="position:absolute;left:50%;top:50%;margin:-3.500px 0 0 -2.700px" width="5.400" height="7.200" viewBox="0 0 6 8"><path d="M0 1.500h6M2 1.500V.5h2v1M.8 2.500h4.400V7.500H.8z" fill="none" stroke="#f6bcbc" stroke-width=".8"/><path d="M2.300 3.500v3M3.700 3.500v3" stroke="#f6bcbc" stroke-width=".5"/></svg></div></div>
<div class="row hl" style="top:388.0px"><div class="grip" style="left:1.500px;top:9px"></div><div class="c" style="left:13px">10.6</div><div style="position:absolute;left:40px;top:8px;width:12px;height:12px;border:1px solid #e6e6e6;background:#fff;border-radius:1px"></div><div class="in" style="left:55px;width:212px;padding-left:3.500px;border-radius:2px 0 0 2px">Brick Sand<span style="border-left:1px solid #333;margin-left:1px"></span></div><div class="in" style="left:266px;width:14px;border-radius:0;border-left:0"><svg style="position:absolute;left:50%;top:50%;margin:-4px 0 0 -4.500px" width="9" height="8" viewBox="0 0 9 8"><rect x=".5" y=".5" width="5.500" height="4.500" rx=".8" fill="none" stroke="#bbb" stroke-width=".9"/><rect x="3" y="3" width="5.500" height="4.500" rx=".8" fill="#bbb" stroke="#bbb" stroke-width=".9" fill-opacity=".25"/></svg></div><div class="in" style="left:280px;width:15px;border-left:0;border-radius:0 2px 2px 0"><svg style="position:absolute;left:3px;top:5.500px" width="8" height="8" viewBox="0 0 8 8"><circle cx="3.200" cy="3.200" r="2.300" fill="none" stroke="#888" stroke-width="1"/><path d="M5 5l2.300 2.300" stroke="#888" stroke-width="1.200"/></svg></div><div class="in" style="left:315px;width:44px;padding-left:5px">Materia<span style="position:absolute;right:0;top:0;width:12px;height:19px;background:#fff"></span><svg style="position:absolute;right:2.500px;top:7.500px" width="6" height="4" viewBox="0 0 6 4"><path d="M.5.700l2.500 2.500 2.500-2.500" fill="none" stroke="#888" stroke-width=".9"/></svg></div><div class="in" style="left:362px;width:35px;text-align:right;padding-right:1.500px;border-radius:2px 0 0 2px">0.000</div><div class="in" style="left:396px;width:15px;border-radius:0"><svg style="position:absolute;left:4px;top:5.500px" width="7" height="8" viewBox="0 0 7 8"><rect x="0" y="0" width="7" height="8" rx=".7" fill="#a8a8a8"/><rect x="1" y="1" width="5" height="1.600" fill="#fff"/><path d="M1 3.800h5M1 5.200h5M1 6.600h5" stroke="#fff" stroke-width=".6" stroke-dasharray="1 .5"/></svg></div><div class="in" style="left:410px;width:15px;border-radius:0 2px 2px 0"><svg style="position:absolute;left:3px;top:5.500px" width="8" height="8" viewBox="0 0 8 8"><path d="M.4 0v7.600H8" fill="none" stroke="#c4c4c4" stroke-width=".8"/><path d="M1.300 1l1.700 1.700 1.500 1.800 1.500 1 1.500 1.700H1.300z" fill="#d2d2d2"/></svg></div><div class="in" style="left:430px;width:31px;padding-left:3px">lm</div><div class="in" style="left:464px;width:65px;text-align:right;padding-right:3.500px">$0.0000</div><div class="c" style="right:213px;font-size:8.800px">$0.00</div><div class="in" style="left:593px;width:32px;text-align:right;padding-right:3px;border-radius:2px 0 0 2px;font-size:8px">0.00</div><div class="in" style="left:624px;width:11px;background:#eee;border-color:#e6e6e6;border-radius:0 2px 2px 0;text-align:center;font-size:8px;color:#555">%</div><div class="badge" style="left:638px;top:7px;width:25px;height:13px;font-size:5.800px;line-height:13px">8.25%</div><div class="badge" style="right:92px;top:7px;width:27px;height:14px;font-size:7.300px;line-height:14px">$0.00</div><div class="sq" style="left:714px;width:17px">P</div><div class="sq" style="left:733px;width:11px">N</div><div class="sq" style="left:746px;width:12px">S</div><div class="sq" style="left:759px;width:12px">T</div><div class="sq" style="left:772px;width:13px"><svg style="position:absolute;left:50%;top:50%;margin:-4px 0 0 -4.500px" width="9" height="8" viewBox="0 0 9 8"><rect x=".5" y=".5" width="5.500" height="4.500" rx=".8" fill="none" stroke="#bbb" stroke-width=".9"/><rect x="3" y="3" width="5.500" height="4.500" rx=".8" fill="#bbb" stroke="#bbb" stroke-width=".9" fill-opacity=".25"/></svg></div><div class="sq" style="left:788px;width:14px;background:#e03c3c;border-color:#e03c3c"><svg style="position:absolute;left:50%;top:50%;margin:-3.500px 0 0 -2.700px" width="5.400" height="7.200" viewBox="0 0 6 8"><path d="M0 1.500h6M2 1.500V.5h2v1M.8 2.500h4.400V7.500H.8z" fill="none" stroke="#f6bcbc" stroke-width=".8"/><path d="M2.300 3.500v3M3.700 3.500v3" stroke="#f6bcbc" stroke-width=".5"/></svg></div></div>
<div style="position:absolute;left:178px;top:415px;width:803px;height:1px;background:#e6e6e6"></div>
<div class="btn" style="left:179px;top:436px;width:27px;height:23px;background:#4cae4c;border-radius:2px 0 0 2px"><svg style="position:absolute;left:8.5px;top:6.5px" width="10" height="10" viewBox="0 0 10 10"><path d="M5 .5v9M.5 5h9" stroke="#e8f5e8" stroke-width="1"/></svg></div>
<div class="btn" style="left:206px;top:436px;width:39px;height:23px;background:#ef9d36;font-size:9.500px;line-height:23px;color:#fbe9cf">Save</div>
<div id="dd"><div class="sel">362179 - DINGO BRICK SAND 66lb<br>$9.99 (Builder's Supply &gt; EXTERIOR WALL&gt; BRICKLAYER)</div><div>165334 - MASONS BRICK TIE SILVER 4.3in 250 PACK<br>$136&nbsp; (Builder's Supply &gt; EXTERIOR WALL&gt; BRICKLAYER)</div></div>
<div class="sec" style="top:482.5px"><div class="grip" style="left:7px;top:15px"></div><div class="n">11</div><div class="cb"></div><div class="pill"><svg style="position:absolute;left:8px;top:2.500px" width="7" height="7" viewBox="0 0 7 7"><path d="M1.500 1h4v2.500h-4zM3.500 3.500v3" fill="none" stroke="#b9781f" stroke-width=".9"/></svg></div><div class="nm">Bricklayer</div><div class="pr">$0.00</div><div class="cp"><svg style="position:absolute;left:6px;top:8px" width="15" height="10" viewBox="0 0 15 10"><rect x=".5" y=".5" width="7" height="5.500" rx=".8" fill="none" stroke="#a6a6a6" stroke-width=".8"/><rect x="3.500" y="3.500" width="7" height="5.500" rx=".8" fill="#ebebeb" stroke="#a6a6a6" stroke-width=".8"/><path d="M11.300 5h3.200l-1.600 2z" fill="#777"/></svg></div><div class="del"><svg style="position:absolute;left:8.500px;top:8.500px" width="7" height="9" viewBox="0 0 7 9"><path d="M0 1.800h7M2.300 1.800V.6h2.400v1.200M1 2.800h5V8.400H1z" fill="none" stroke="#f5b8b8" stroke-width=".8"/><path d="M2.700 4v3.200M4.300 4v3.200" stroke="#f5b8b8" stroke-width=".5"/></svg></div></div>
<div class="sec" style="top:525.7px"><div class="grip" style="left:7px;top:15px"></div><div class="n">12</div><div class="cb"></div><div class="pill"><svg style="position:absolute;left:8px;top:2.500px" width="7" height="7" viewBox="0 0 7 7"><path d="M1.500 1h4v2.500h-4zM3.500 3.500v3" fill="none" stroke="#b9781f" stroke-width=".9"/></svg></div><div class="nm">Frame Carpenter</div><div class="pr">$5,909.10</div><div class="cp"><svg style="position:absolute;left:6px;top:8px" width="15" height="10" viewBox="0 0 15 10"><rect x=".5" y=".5" width="7" height="5.500" rx=".8" fill="none" stroke="#a6a6a6" stroke-width=".8"/><rect x="3.500" y="3.500" width="7" height="5.500" rx=".8" fill="#ebebeb" stroke="#a6a6a6" stroke-width=".8"/><path d="M11.300 5h3.200l-1.600 2z" fill="#777"/></svg></div><div class="del"><svg style="position:absolute;left:8.500px;top:8.500px" width="7" height="9" viewBox="0 0 7 9"><path d="M0 1.800h7M2.300 1.800V.6h2.400v1.200M1 2.800h5V8.400H1z" fill="none" stroke="#f5b8b8" stroke-width=".8"/><path d="M2.700 4v3.200M4.300 4v3.200" stroke="#f5b8b8" stroke-width=".5"/></svg></div></div>
<div class="sec" style="top:568px"><div class="grip" style="left:7px;top:15px"></div><div class="n">13</div><div class="cb"></div><div class="pill"><svg style="position:absolute;left:8px;top:2.500px" width="7" height="7" viewBox="0 0 7 7"><path d="M1.500 1h4v2.500h-4zM3.500 3.500v3" fill="none" stroke="#b9781f" stroke-width=".9"/></svg></div><div class="nm">Ground floor framing</div><div class="pr">$21,729.87</div><div class="cp"><svg style="position:absolute;left:6px;top:8px" width="15" height="10" viewBox="0 0 15 10"><rect x=".5" y=".5" width="7" height="5.500" rx=".8" fill="none" stroke="#a6a6a6" stroke-width=".8"/><rect x="3.500" y="3.500" width="7" height="5.500" rx=".8" fill="#ebebeb" stroke="#a6a6a6" stroke-width=".8"/><path d="M11.300 5h3.200l-1.600 2z" fill="#777"/></svg></div><div class="del"><svg style="position:absolute;left:8.500px;top:8.500px" width="7" height="9" viewBox="0 0 7 9"><path d="M0 1.800h7M2.300 1.800V.6h2.400v1.200M1 2.800h5V8.400H1z" fill="none" stroke="#f5b8b8" stroke-width=".8"/><path d="M2.700 4v3.200M4.300 4v3.200" stroke="#f5b8b8" stroke-width=".5"/></svg></div></div>
<div id="foot"><div class="fb" style="left:77px;width:75px">Sub Total (Ex)</div><div class="v" style="left:114px;top:31px;color:#4a90d9">$191,276.28</div><div class="fb" style="left:313px;width:47px">Markup</div><div class="v" style="left:336px;top:31px;color:#4a90d9">$38,255.27</div><div class="v" style="left:556px;top:5.500px;font-size:10.300px;color:#8c8c8c">TAX</div><div class="v" style="left:556px;top:27px;color:#7a7a7a">$22,953.18</div><div class="v" style="left:779px;top:5.500px;font-size:10.700px;color:#8c8c8c">Quote Total</div><div class="v" style="left:779px;top:27px;color:#7a7a7a">$252,484.73</div></div>
<div style="position:absolute;right:0;bottom:0;width:5px;height:4px;background:radial-gradient(ellipse at 100% 100%,#222 0,#555 40%,rgba(255,255,255,0) 100%);z-index:9"></div>
</body>
</html>
